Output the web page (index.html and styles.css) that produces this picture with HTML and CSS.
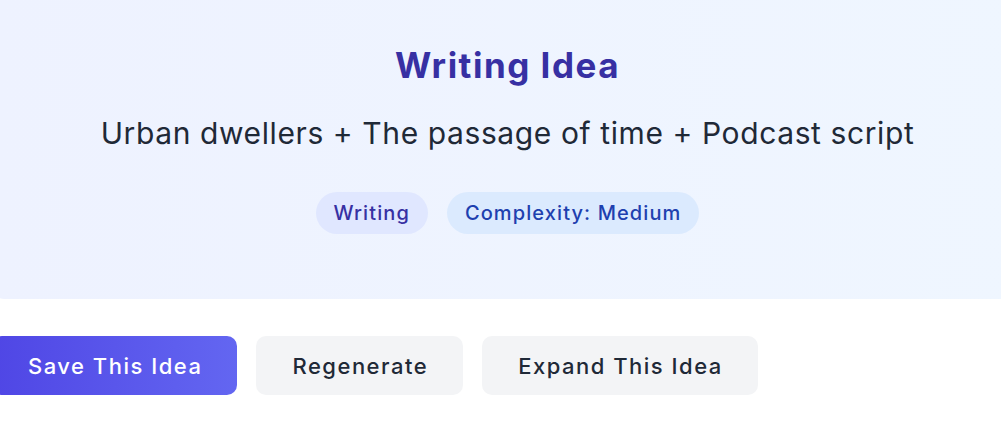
FILE: index.html
```html
<!DOCTYPE html>
<html lang="en">
<head>
<meta charset="utf-8">
<title>Writing Idea</title>
<link rel="stylesheet" href="styles.css">
</head>
<body>
<main class="idea-card">
  <section class="idea-panel">
    <h1 class="idea-title">Writing Idea</h1>
    <p class="idea-text">Urban dwellers + The passage of time + Podcast script</p>
    <div class="tags">
      <span class="tag tag-category">Writing</span>
      <span class="tag tag-complexity">Complexity: Medium</span>
    </div>
  </section>
  <div class="actions">
    <button class="btn btn-primary">Save This Idea</button>
    <button class="btn btn-secondary">Regenerate</button>
    <button class="btn btn-secondary">Expand This Idea</button>
  </div>
</main>
</body>
</html>
```
FILE: styles.css
```css
html, body {
  margin: 0;
  padding: 0;
  background: #ffffff;
  overflow: hidden;
}
body {
  font-family: Inter, "Noto Sans", sans-serif;
  color: #1f2937;
}
.idea-card {
  margin: 0 -22px 0 -8px;
}
.idea-panel {
  background: linear-gradient(90deg, #eef2ff 0%, #eff6ff 100%);
  padding: 45px 0 65px;
  text-align: center;
  border-radius: 0 0 12px 12px;
}
.idea-title {
  margin: 0;
  font-size: 35px;
  line-height: 40px;
  font-weight: 700;
  letter-spacing: 1.5px;
  color: #3730a3;
}
.idea-text {
  margin: 30px 0 0;
  font-size: 30px;
  line-height: 36px;
  font-weight: 400;
  letter-spacing: 0.6px;
  color: #1f2937;
}
.tags {
  margin-top: 41px;
  display: flex;
  justify-content: center;
  gap: 19px;
}
.tag {
  display: inline-flex;
  align-items: center;
  height: 42px;
  padding: 0 18px;
  border-radius: 21px;
  font-size: 20px;
  font-weight: 500;
  letter-spacing: 1.1px;
  box-sizing: border-box;
}
.tag-category {
  background: #e0e7ff;
  color: #3730a3;
}
.tag-complexity {
  background: #dbeafe;
  color: #1e40af;
}
.actions {
  display: flex;
  gap: 19px;
  margin-top: 37px;
}
.btn {
  height: 59px;
  padding: 0 35px 0 36px;
  border: none;
  border-radius: 10px;
  font-family: Inter, "Noto Sans", sans-serif;
  font-size: 22px;
  font-weight: 500;
  letter-spacing: 1.5px;
  cursor: pointer;
}
.btn-primary {
  background: linear-gradient(90deg, #4f46e5 0%, #6366f1 100%);
  color: #ffffff;
}
.btn-secondary {
  background: #f3f4f6;
  color: #1f2937;
}
```
